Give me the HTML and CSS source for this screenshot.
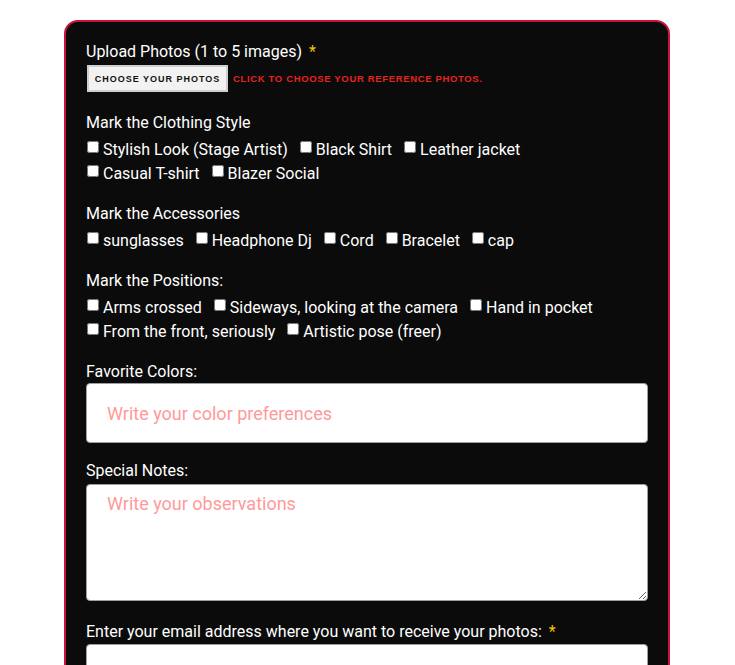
FILE: index.html
```html
<!DOCTYPE html>
<html lang="en">
<head>
  <meta charset="UTF-8" />
  <meta name="viewport" content="width=device-width, initial-scale=1.0" />
  <title>Photo Request</title>
  <link rel="stylesheet" href="styles.css">
</head>
<body>

  <form class="card">
    <div class="group group-upload">
      <div class="label">Upload Photos (1 to 5 images) <span class="req">*</span></div>
      <div class="upload-row">
        <button type="button" class="upload-btn">Choose your photos</button>
        <span class="upload-hint">Click to choose your reference photos.</span>
      </div>
    </div>

    <div class="group">
      <div class="label">Mark the Clothing Style</div>
      <div class="options">
        <label class="opt"><input type="checkbox"> Stylish Look (Stage Artist)</label>
        <label class="opt"><input type="checkbox"> Black Shirt</label>
        <label class="opt"><input type="checkbox"> Leather jacket</label>
        <label class="opt"><input type="checkbox"> Casual T-shirt</label>
        <label class="opt"><input type="checkbox"> Blazer Social</label>
      </div>
    </div>

    <div class="group">
      <div class="label">Mark the Accessories</div>
      <div class="options">
        <label class="opt"><input type="checkbox"> sunglasses</label>
        <label class="opt"><input type="checkbox"> Headphone Dj</label>
        <label class="opt"><input type="checkbox"> Cord</label>
        <label class="opt"><input type="checkbox"> Bracelet</label>
        <label class="opt"><input type="checkbox"> cap</label>
      </div>
    </div>

    <div class="group">
      <div class="label">Mark the Positions:</div>
      <div class="options">
        <label class="opt"><input type="checkbox"> Arms crossed</label>
        <label class="opt"><input type="checkbox"> Sideways, looking at the camera</label>
        <label class="opt"><input type="checkbox"> Hand in pocket</label>
        <label class="opt"><input type="checkbox"> From the front, seriously</label>
        <label class="opt"><input type="checkbox"> Artistic pose (freer)</label>
      </div>
    </div>

    <div class="group group-field">
      <div class="label">Favorite Colors:</div>
      <input type="text" class="field" placeholder="Write your color preferences">
    </div>

    <div class="group group-field group-notes">
      <div class="label">Special Notes:</div>
      <textarea class="field notes" placeholder="Write your observations"></textarea>
    </div>

    <div class="group group-field">
      <div class="label">Enter your email address where you want to receive your photos: <span class="req">*</span></div>
      <input type="email" class="field email">
    </div>
  </form>

</body>
</html>
```

FILE: styles.css
```css
* {
  margin: 0;
  padding: 0;
  box-sizing: border-box;
}

html, body {
  background-color: #fff;
  font-family: Roboto, 'Liberation Sans', Arial, sans-serif;
}

.card {
  width: 606px;
  margin: 20px 0 0 64px;
  padding: 20px 19px 40px 20px;
  background-color: #0b0b0b;
  border: 2px solid #c8143d;
  border-radius: 14px;
  color: #fff;
}

.group {
  margin-bottom: 18px;
}

.group-upload {
  margin-bottom: 21px;
}

.group-notes {
  margin-bottom: 21px;
}

.label {
  font-size: 16px;
  line-height: 20px;
  margin-bottom: 3px;
}

.group-field .label {
  margin-bottom: 1px;
}

.req {
  color: #f5c400;
  margin-left: 3px;
}

.upload-row {
  display: flex;
  align-items: center;
  gap: 5px;
  margin-top: 1px;
}

.upload-btn {
  width: 141px;
  height: 27px;
  margin-left: 1px;
  background-color: #f2f2f2;
  border: 2px solid #cfcfcf;
  font-family: 'Liberation Sans', Arial, sans-serif;
  font-size: 9px;
  font-weight: bold;
  letter-spacing: 1px;
  text-transform: uppercase;
  color: #111;
}

.upload-hint {
  font-family: 'Liberation Sans', Arial, sans-serif;
  font-size: 9.5px;
  font-weight: bold;
  letter-spacing: 0.65px;
  text-transform: uppercase;
  color: #e8231f;
}

.options {
  display: flex;
  flex-wrap: wrap;
  margin-top: 5px;
}

.opt {
  font-size: 16px;
  line-height: 24px;
  margin-right: 11px;
  white-space: nowrap;
}

.opt input {
  width: 12px;
  height: 12px;
  margin: 0 0 0 1px;
  vertical-align: 2px;
}

.field {
  display: block;
  width: 562px;
  height: 60px;
  padding: 0 20px;
  background-color: #fff;
  border: 1px solid #9aa0a6;
  border-radius: 4px;
  font-family: Roboto, 'Liberation Sans', Arial, sans-serif;
  font-size: 18px;
  color: #222;
}

.field::placeholder {
  color: #ff9a9a;
}

.notes {
  height: 117px;
  margin-top: 3px;
  padding: 8px 20px;
  resize: vertical;
}

.email {
  margin-top: 2px;
}
```
